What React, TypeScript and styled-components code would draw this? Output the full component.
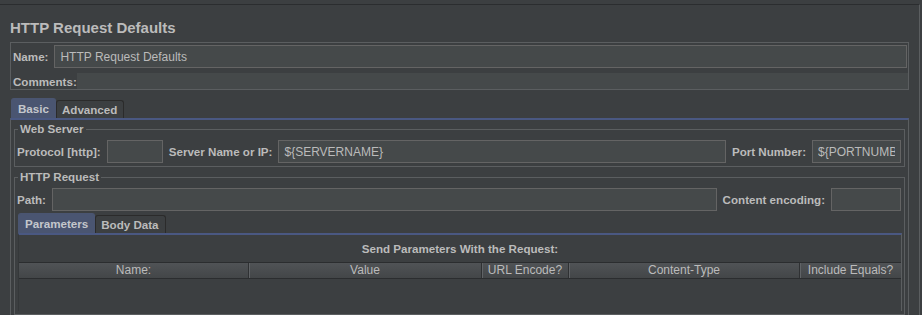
import React from "react";
import styled, { createGlobalStyle } from "styled-components";

const GlobalStyle = createGlobalStyle`
  html, body {
    margin: 0;
    padding: 0;
    background: #3c3f41;
    overflow: hidden;
  }
  body {
    font-family: "Liberation Sans", Arial, sans-serif;
    font-size: 12px;
    color: #bbbbbb;
  }
`;

const Frame = styled.div`
  box-sizing: border-box;
  width: 920px;
  height: 311px;
  margin-top: 4px;
  padding: 0 10px;
  border-top: 1px solid #2b2d2f;
  border-right: 1px solid #5b5e60;
  display: flex;
  flex-direction: column;
  overflow: hidden;
`;

const Title = styled.h1`
  margin: 14px 0 0;
  font-size: 15px;
  line-height: 18px;
  font-weight: bold;
  color: #bbbbbb;
`;

const NamePanel = styled.div`
  margin-top: 5px;
  border: 1px solid #5b5e60;
  padding: 2px 0 0 2px;
  display: flex;
  flex-direction: column;
`;

const Label = styled.span`
  font-weight: bold;
  font-size: 11.6px;
  white-space: nowrap;
`;

const FieldRow = styled.div`
  display: flex;
  align-items: center;
  gap: 6px;
  height: 23px;
  margin-top: ${(p: { $top?: number }) => p.$top ?? 4}px;
  padding-right: 1px;
`;

const TextField = styled.input<{ $w?: number }>`
  box-sizing: border-box;
  height: 23px;
  min-width: 0;
  flex: ${(p) => (p.$w ? `0 0 ${p.$w}px` : "1 1 0")};
  margin: 0;
  padding: 0 5px;
  background: #45494a;
  border: 1px solid #646464;
  border-radius: 0;
  outline: none;
  color: #bbbbbb;
  font-family: "Liberation Sans", Arial, sans-serif;
  font-size: 12px;
`;

const CommentsRow = styled.div`
  display: flex;
  align-items: center;
  height: 16px;
  margin-top: 5px;
`;

const CommentsArea = styled.div`
  flex: 1;
  align-self: stretch;
  background: #45494a;
`;

const TabBar = styled.div<{ $top: number; $inset: number }>`
  display: flex;
  align-items: flex-end;
  height: 20px;
  margin-top: ${(p) => p.$top}px;
  padding-left: ${(p) => p.$inset}px;
`;

const Tab = styled.div<{ $active?: boolean }>`
  box-sizing: border-box;
  height: ${(p) => (p.$active ? 20 : 18)}px;
  padding: 0 6px 0 ${(p) => (p.$active ? 6 : 5)}px;
  display: flex;
  align-items: center;
  font-weight: bold;
  font-size: 11.6px;
  border-radius: 3px 3px 0 0;
  background: ${(p) => (p.$active ? "#4a5571" : "#3c3f41")};
  border: 1px solid ${(p) => (p.$active ? "#4a5571" : "#2b2b2b")};
  border-bottom: none;
  color: ${(p) => (p.$active ? "#c4c7cc" : "#bbbbbb")};
`;

const TabPanel = styled.div`
  flex: 1;
  display: flex;
  flex-direction: column;
  border-top: 2px solid #4a5882;
  border-left: 1px solid #5b5e60;
  border-right: 1px solid #5b5e60;
  padding: 2px 3px 0 3px;
  min-height: 0;
`;

const Group = styled.fieldset<{ $grow?: boolean }>`
  margin: ${(p) => (p.$grow ? "3px 0 0" : "0")};
  padding: 0 2px 3px 2px;
  border: 1px solid #5b5e60;
  min-width: 0;
  display: flex;
  flex-direction: column;
  flex: ${(p) => (p.$grow ? "1" : "none")};
`;

const Legend = styled.legend`
  margin-left: 1px;
  padding: 0 2px;
  font-weight: bold;
  font-size: 11.6px;
  line-height: 14px;
`;

const InnerTabs = styled.div`
  flex: 1;
  display: flex;
  flex-direction: column;
  margin-left: 1px;
`;

const InnerPanel = styled.div`
  flex: 1;
  display: flex;
  flex-direction: column;
  border-top: 2px solid #4a5882;
  border-left: 1px solid #35383a;
  border-right: 1px solid #5b5e60;
`;

const Caption = styled.div`
  height: 27px;
  line-height: 28px;
  text-align: center;
  font-weight: bold;
  font-size: 11.6px;
`;

const TableHeader = styled.div`
  display: grid;
  grid-template-columns: 230px 233px 87px 231px 1fr;
  height: 15px;
  border-top: 1px solid #2b2d2f;
  border-bottom: 1px solid #2b2d2f;
  background: linear-gradient(#505356, #434648);
`;

const HeaderCell = styled.div<{ $last?: boolean }>`
  text-align: center;
  line-height: 15px;
  font-size: 12px;
  white-space: nowrap;
  overflow: hidden;
  border-right: ${(p) => (p.$last ? "none" : "1px solid #2f3133")};
  box-shadow: ${(p) => (p.$last ? "none" : "1px 0 0 #606366")};
`;

const TableBody = styled.div`
  flex: 1;
  background: #3c3f41;
`;

const columns = ["Name:", "Value", "URL Encode?", "Content-Type", "Include Equals?"];

const App: React.FC = () => {
  return (
    <>
      <GlobalStyle />
      <Frame>
        <Title>HTTP Request Defaults</Title>
        <NamePanel>
          <FieldRow $top={0}>
            <Label>Name:</Label>
            <TextField readOnly defaultValue="HTTP Request Defaults" />
          </FieldRow>
          <CommentsRow>
            <Label>Comments:</Label>
            <CommentsArea />
          </CommentsRow>
        </NamePanel>

        <TabBar $top={8} $inset={1}>
          <Tab $active>Basic</Tab>
          <Tab>Advanced</Tab>
        </TabBar>
        <TabPanel>
          <Group>
            <Legend>Web Server</Legend>
            <FieldRow>
              <Label>Protocol [http]:</Label>
              <TextField readOnly $w={56} />
              <Label>Server Name or IP:</Label>
              <TextField readOnly defaultValue="${SERVERNAME}" />
              <Label>Port Number:</Label>
              <TextField readOnly $w={89} defaultValue="${PORTNUMBER}" />
            </FieldRow>
          </Group>

          <Group $grow>
            <Legend>HTTP Request</Legend>
            <FieldRow>
              <Label>Path:</Label>
              <TextField readOnly />
              <Label>Content encoding:</Label>
              <TextField readOnly $w={70} />
            </FieldRow>
            <InnerTabs>
              <TabBar $top={2} $inset={0}>
                <Tab $active>Parameters</Tab>
                <Tab>Body Data</Tab>
              </TabBar>
              <InnerPanel>
                <Caption>Send Parameters With the Request:</Caption>
                <TableHeader>
                  {columns.map((c, i) => (
                    <HeaderCell key={c} $last={i === columns.length - 1}>
                      {c}
                    </HeaderCell>
                  ))}
                </TableHeader>
                <TableBody />
              </InnerPanel>
            </InnerTabs>
          </Group>
        </TabPanel>
      </Frame>
    </>
  );
};

export default App;
